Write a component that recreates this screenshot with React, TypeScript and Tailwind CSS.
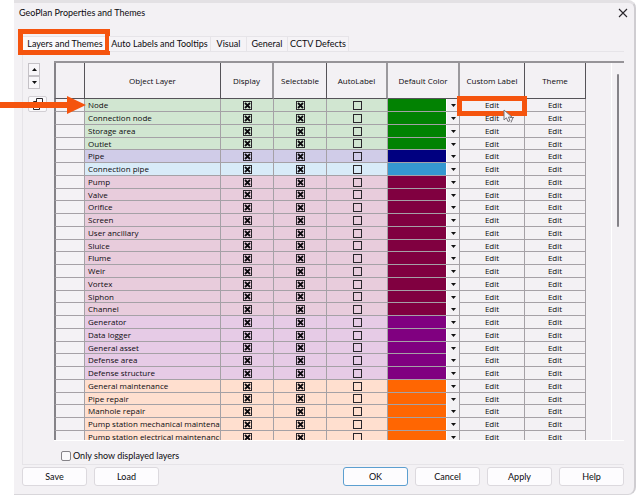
import React, { useState } from 'react';

interface Layer {
  name: string;
  row: string;
  color: string;
}

const group = (names: string[], row: string, color: string): Layer[] =>
  names.map((name) => ({ name, row, color }));

const LAYERS: Layer[] = [
  ...group(['Node', 'Connection node', 'Storage area', 'Outlet'], 'bg-[#d1e6d1]', '#028202'),
  ...group(['Pipe'], 'bg-[#d0cce8]', '#000080'),
  ...group(['Connection pipe'], 'bg-[#d8ebf8]', '#3598d0'),
  ...group(
    ['Pump', 'Valve', 'Orifice', 'Screen', 'User ancillary', 'Sluice', 'Flume', 'Weir', 'Vortex', 'Siphon', 'Channel'],
    'bg-[#e8ccdc]',
    '#800040'
  ),
  ...group(['Generator', 'Data logger', 'General asset', 'Defense area', 'Defense structure'], 'bg-[#e6cbe6]', '#800080'),
  ...group(
    [
      'General maintenance',
      'Pipe repair',
      'Manhole repair',
      'Pump station mechanical maintenance',
      'Pump station electrical maintenance',
    ],
    'bg-[#ffdfcf]',
    '#ff6602'
  ),
];

const TABS = [
  { name: 'Layers and Themes', width: 'w-[87px]' },
  { name: 'Auto Labels and Tooltips', width: 'w-[102px]' },
  { name: 'Visual', width: 'w-9' },
  { name: 'General', width: 'w-[41px]' },
  { name: 'CCTV Defects', width: 'w-[61px]' },
];

const CELL = 'border-r border-b border-[#a5a1a6] p-0';
const HEAD = 'h-9 border-r border-b border-[#555358] p-0 font-medium';
const HEAD_SOFT = 'h-9 border-r-2 border-b border-r-[#9b999d] border-b-[#555358] p-0 font-medium';

const GridCheckbox = ({ label, initial }: { label: string; initial: boolean }) => {
  const [checked, setChecked] = useState(initial);
  return (
    <span className="mx-auto grid size-[9px]">
      <input
        type="checkbox"
        aria-label={label}
        checked={checked}
        onChange={() => setChecked(!checked)}
        className="col-start-1 row-start-1 m-0 size-[9px] appearance-none border border-[#29262b]"
      />
      {checked && (
        <svg viewBox="0 0 9 9" className="pointer-events-none col-start-1 row-start-1 size-[9px]">
          <path d="M2 2l5 5M7 2L2 7" stroke="#0c0a0e" strokeWidth="1.8" />
        </svg>
      )}
    </span>
  );
};

const SpinButton = ({ label, path }: { label: string; path: string }) => (
  <button aria-label={label} className="flex h-[13px] w-3 items-center justify-center border border-[#c4c1c6] bg-[#f8f6f9]">
    <svg viewBox="0 0 5 3" className="h-[3px] w-[5px]">
      <path d={path} fill="#111" />
    </svg>
  </button>
);

const DialogButton = ({ label, primary }: { label: string; primary?: boolean }) => (
  <button
    className={`h-[19px] w-[65px] rounded-[3px] border bg-[#fdfcfe] leading-3 ${
      primary ? 'border-[#5c9fd0]' : 'border-[#dcd9de]'
    }`}
  >
    {label}
  </button>
);

const Cursor = () => (
  <svg viewBox="0 0 12 16" className="pointer-events-none absolute top-2.5 left-[43px] z-20 h-4 w-3">
    <path d="M1 1v10l2.4-2.2L5 12.5l2-.8-1.6-3.6H9z" fill="#f6f3f6" stroke="#77747a" strokeWidth="1" />
    <path d="M7 8.5h4M10 8.5l-2 5" fill="none" stroke="#77747a" strokeWidth="1" />
  </svg>
);

const LayerRow = ({ layer, index }: { layer: Layer; index: number }) => {
  // every fourth row is one pixel shorter
  const inner = index % 4 === 3 ? 'h-[11px]' : 'h-3';
  return (
    <tr>
      <td className={`${CELL} border-l-2 border-l-[#858388] bg-[#f4f2f5]`} />
      <td className={`${CELL} ${layer.row}`}>
        <div className={`${inner} overflow-hidden pl-[3px] leading-3 whitespace-nowrap`}>{layer.name}</div>
      </td>
      {['Display', 'Selectable', 'AutoLabel'].map((column) => (
        <td key={column} className={`${CELL} ${layer.row}`}>
          <div className={`${inner} flex items-center`}>
            <GridCheckbox label={`${column} ${layer.name}`} initial={column !== 'AutoLabel'} />
          </div>
        </td>
      ))}
      <td className={CELL}>
        <div className={`${inner} grid grid-cols-[1fr_13px]`} style={{ backgroundColor: layer.color }}>
          <select
            aria-label={`Default color ${layer.name}`}
            className="col-span-2 col-start-1 row-start-1 h-full w-full appearance-none bg-transparent"
          >
            <option value={layer.color} aria-label={layer.color} />
          </select>
          <span className="pointer-events-none col-start-2 row-start-1 flex items-center justify-center border-l border-white bg-[#f3f1f4]">
            <svg viewBox="0 0 5 3" className="h-[3px] w-[5px]">
              <path d="M0 0h5L2.5 3z" fill="#111" />
            </svg>
          </span>
        </div>
      </td>
      <td className={`${CELL} relative bg-[#f3f1f4] text-center`}>
        <button className={`${inner} block w-full leading-3`}>Edit</button>
        {index === 0 && (
          <>
            <span className="pointer-events-none absolute -inset-x-[3px] -top-[3px] z-10 h-5 border-[5px] border-[#f5540e]" />
            <Cursor />
          </>
        )}
      </td>
      <td className={`${CELL} bg-[#f3f1f4] text-center`}>
        <button className={`${inner} block w-full leading-3`}>Edit</button>
      </td>
    </tr>
  );
};

const LayerTable = () => (
  <div className="flex h-[380px] min-w-0 flex-1 overflow-hidden border-t-2 border-b border-t-[#969498] border-b-white">
    <div className="min-w-0 flex-1">
      <table className="w-full table-fixed border-separate border-spacing-0 font-['Open_Sans',sans-serif] text-[8px] font-medium text-[#0c0a0e]">
        <colgroup>
          <col className="w-[31px]" />
          <col />
          <col className="w-[53px]" />
          <col className="w-[53px]" />
          <col className="w-[61px]" />
          <col className="w-[72px]" />
          <col className="w-[65px]" />
          <col className="w-[61px]" />
        </colgroup>
        <thead>
          <tr>
            <th aria-label="Row" className={`${HEAD} border-l-2 border-l-[#858388]`} />
            <th className={HEAD}>Object Layer</th>
            <th className={HEAD_SOFT}>Display</th>
            <th className={HEAD}>Selectable</th>
            <th className={HEAD_SOFT}>AutoLabel</th>
            <th className={HEAD_SOFT}>Default Color</th>
            <th className={HEAD}>Custom Label</th>
            <th className={HEAD}>Theme</th>
          </tr>
        </thead>
        <tbody>
          {LAYERS.map((layer, i) => (
            <LayerRow key={layer.name} layer={layer} index={i} />
          ))}
        </tbody>
      </table>
    </div>
    <div className="ml-[25px] w-[13px] border-l border-white pt-[11px] pl-[5px]">
      <div className="h-[153px] w-0.5 rounded-full bg-[#858388]" />
    </div>
  </div>
);

export default function App() {
  const [tab, setTab] = useState(TABS[0].name);

  return (
    <div className="relative flex min-h-screen overflow-hidden bg-white pl-[14px] font-[Lato,sans-serif] text-[9px] text-[#0c0a0e]">
      <main className="flex min-w-0 flex-1 flex-col rounded-r-lg border-t-[3px] border-r-2 border-b border-t-[#e3e1e4] border-r-[#cfcdd1] border-b-[#d8d6da] bg-[#f3f1f4] pr-2.5 pl-2">
        <header className="-mx-2 flex h-[33px] items-start justify-between pt-[3px] pr-0.5 pl-[5px]">
          <h1 className="leading-[14px]">GeoPlan Properties and Themes</h1>
          <button aria-label="Close" className="flex size-[14px] items-center justify-center">
            <svg viewBox="0 0 10 10" className="size-2.5">
              <path d="M1 1l8 8M9 1L1 9" stroke="#29262b" strokeWidth="1.1" />
            </svg>
          </button>
        </header>

        <div role="tablist" className="flex h-[15px]">
          {TABS.map(({ name, width }, i) => (
            <button
              key={name}
              role="tab"
              aria-selected={tab === name}
              onClick={() => setTab(name)}
              className={`relative border-t border-r border-[#e6e4e8] leading-3 whitespace-nowrap ${width} ${
                tab === name ? 'bg-[#faf9fb]' : 'bg-[#f5f3f6]'
              }`}
            >
              {name}
              {i === 0 && (
                <span className="pointer-events-none absolute -top-2 -right-0.5 -left-1 h-[26px] border-[5px] border-[#f5540e]" />
              )}
            </button>
          ))}
        </div>

        <section className="border border-r-0 border-[#e6e4e8] pt-[9px] pb-px pl-[5px]">
          <div className="flex gap-[7px]">
            <div className="w-[19px] pt-0.5">
              <SpinButton label="Move up" path="M0 3h5L2.5 0z" />
              <SpinButton label="Move down" path="M0 0h5L2.5 3z" />
              <button
                aria-label="Copy"
                className="mt-[7px] flex h-4 w-[19px] items-center justify-center rounded-[2px] border border-[#d2cfd4] bg-[#faf9fb]"
              >
                <svg viewBox="0 0 10 12" className="h-3 w-2.5" fill="none" stroke="#29262b">
                  <path d="M3.5.5h6v8h-6zM3.5 3.5h-3v8h6v-3" />
                </svg>
              </button>
            </div>
            <LayerTable />
          </div>
          <label className="mt-2 ml-[33px] flex w-fit items-center gap-0.5 leading-[14px]">
            <input type="checkbox" className="size-2.5 appearance-none rounded-[2px] border border-[#858388] bg-[#faf9fb] checked:bg-[#5c9fd0]" />
            Only show displayed layers
          </label>
        </section>

        <footer className="mt-0.5 flex items-center gap-[7px] pb-2">
          <DialogButton label="Save" />
          <DialogButton label="Load" />
          <span className="flex-1" />
          <DialogButton label="OK" primary />
          <DialogButton label="Cancel" />
          <DialogButton label="Apply" />
          <DialogButton label="Help" />
        </footer>
      </main>

      <svg viewBox="0 0 86 18" className="pointer-events-none absolute top-24 left-0 h-[18px] w-[86px]">
        <path d="M0 6h67V0l19 9-19 9v-6H0z" fill="#f5540e" />
      </svg>
    </div>
  );
}
